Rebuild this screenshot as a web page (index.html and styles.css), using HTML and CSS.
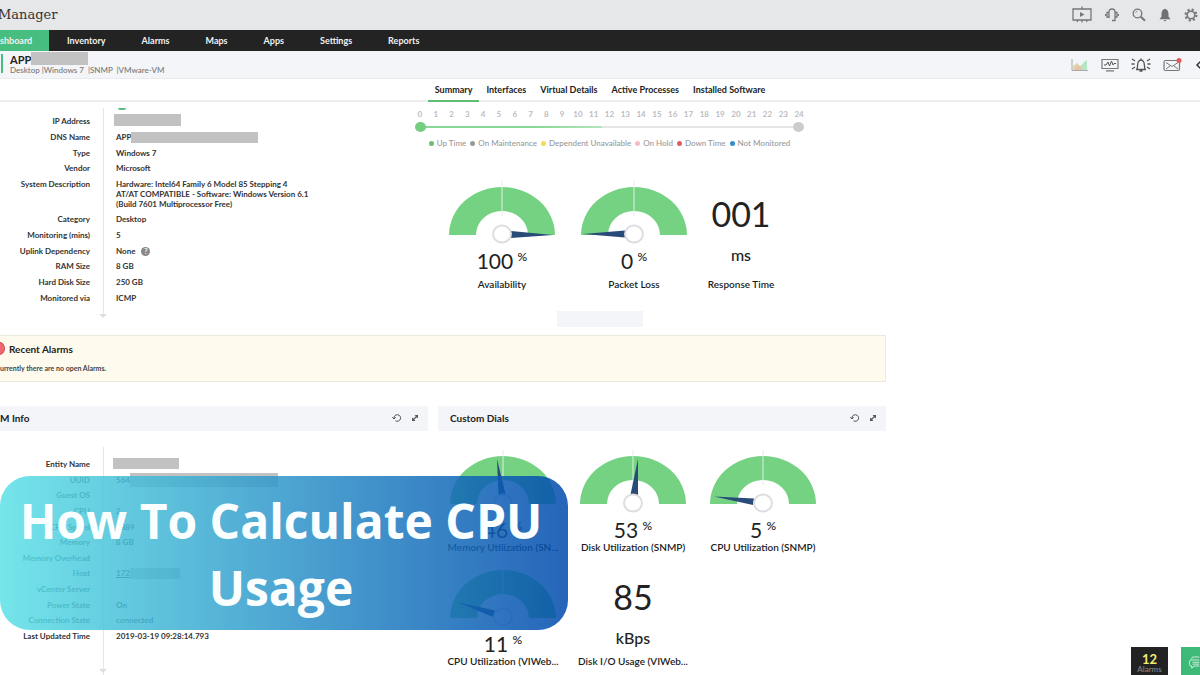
FILE: index.html
```html
<!DOCTYPE html>
<html lang="en">
<head>
<meta charset="utf-8">
<title>Manager</title>
<link rel="stylesheet" href="styles.css">
</head>
<body>
<svg class="defs" aria-hidden="true">
  <symbol id="dial" viewBox="0 0 106 64">
    <path d="M0 54A53 48 0 0 1 106 54H79A26 24 0 0 0 27 54Z" fill="#75d282"/>
    <path d="M53 0V35" stroke="#e3eee5"/>
  </symbol>
  <symbol id="hub" viewBox="0 0 106 64">
    <ellipse cx="53" cy="53" rx="9" ry="8.500" fill="#fff" stroke="#dedee1" stroke-width="2"/>
  </symbol>
  <symbol id="reload" viewBox="0 0 10 10">
    <path d="M2 5.500A3.300 3.300 0 1 1 3.500 7.800M.3 4.200 2 6l1.700-1.700" fill="none" stroke="#555"/>
  </symbol>
  <symbol id="expand" viewBox="0 0 8 8">
    <path d="M3.500 1H7V4.500L5.800 3.300 4.600 4.500 3.700 3.500 4.800 2.300ZM4.500 7H1V3.500L2.200 4.700 3.400 3.600 4.300 4.500 3.200 5.700Z" fill="#555"/>
  </symbol>
</svg>

<header class="brand">
  <span class="logo">Manager</span>
  <div class="tools">
    <button aria-label="Presentation"><svg width="20" height="18" viewBox="0 0 20 18"><path d="M1 3H19V14H1ZM10 .5V3M10 14v2.500M6 14 5 16M14 14l1 2" fill="none" stroke="#77777a" stroke-width="1.300"/><path d="M8 6l4.500 2.500L8 11Z" fill="#77777a"/></svg></button>
    <button aria-label="Support"><svg width="14" height="14" viewBox="0 0 14 14"><path d="M4 10V4Q4 1 7 1T10 4V10M3.500 4.500H2V9H3.500M10.500 4.500H12V9H10.500M10 9V12.500H7M.5 6v2M13.500 6v2" fill="none" stroke="#77777a" stroke-width="1.300"/></svg></button>
    <button aria-label="Search"><svg width="14" height="14" viewBox="0 0 14 14"><circle cx="5.500" cy="5.500" r="4.300" fill="none" stroke="#77777a" stroke-width="1.300"/><path d="M8.800 8.800 13 12.800" stroke="#77777a" stroke-width="2"/><path d="M3.500 5A2.200 2.200 0 0 1 5.500 3.200" fill="none" stroke="#999"/></svg></button>
    <button aria-label="Notifications"><svg width="12" height="14" viewBox="0 0 12 14"><path d="M6 .8C8.500 1.500 9.500 3.500 9.500 6V8.500L11.500 11.300H.5L2.500 8.500V6C2.500 3.500 3.500 1.500 6 .8ZM4.500 12H7.500L6 13.500Z" fill="#717174"/></svg></button>
    <button aria-label="Settings"><svg width="14" height="14" viewBox="0 0 14 14"><circle cx="7" cy="7" r="5.400" fill="none" stroke="#77777a" stroke-width="2.200" stroke-dasharray="2.120"/><circle cx="7" cy="7" r="3.800" fill="none" stroke="#77777a" stroke-width="1.600"/></svg></button>
  </div>
</header>

<nav class="menu">
  <a class="current" href="#">shboard</a>
  <a href="#">Inventory</a><a href="#">Alarms</a><a href="#">Maps</a><a href="#">Apps</a><a href="#">Settings</a><a href="#">Reports</a>
</nav>

<section class="device">
  <div class="device-name">
    <h1>APP<span class="mask name-mask"></span></h1>
    <p>Desktop |Windows 7 &nbsp;|SNMP &nbsp;|VMware-VM</p>
  </div>
  <div class="tools device-tools">
    <button aria-label="Graph"><svg width="18" height="14" viewBox="0 0 18 14"><path d="M2 12V8L6 5 9 8 13 5 16 8V12Z" fill="#dfd6b0"/><path d="M8 12 13 4 16 2V12Z" fill="#b5e6c6"/><path d="M3 12 7 7 12 12Z" fill="#e6c3a8"/><path d="M1 1V12.500H17" fill="none" stroke="#aaa"/></svg></button>
    <button aria-label="Monitor"><svg width="18" height="14" viewBox="0 0 18 14"><path d="M1 1.500H17V10.500H1ZM5 12.800H13" fill="none" stroke="#77777a" stroke-width="1.200"/><path d="M3 7H5L7 4 8.500 8 10.500 3 12 7 13 5.500H15" fill="none" stroke="#555"/></svg></button>
    <button aria-label="Alarm"><svg width="20" height="16" viewBox="0 0 20 16"><path d="M5 12.500H15M6 12C7 10 6 5 8 4Q10 2 12 4C14 5 13 10 14 12M10 1.500V3M8.500 14H11.500M4 4 1 2M3.500 7H.5M4 10 1 12M16 4l3-2M16.500 7h3M16 10l3 2" fill="none" stroke="#555" stroke-width="1.300"/></svg></button>
    <button aria-label="Mail"><svg width="20" height="14" viewBox="0 0 20 14"><rect x="1" y="2.500" width="15.500" height="10" rx="1.500" fill="none" stroke="#77777a" stroke-width="1.200"/><path d="M3 4.500 9 8.500 15 4.500M3 11 7 8M15 11 11 8" fill="none" stroke="#77777a"/><circle cx="16" cy="2.600" r="2.500" fill="#e35b58"/></svg></button>
    <button aria-label="Back"><svg width="8" height="12" viewBox="0 0 8 12"><path d="M7 1 2 6 7 11" fill="none" stroke="#333" stroke-width="1.500"/></svg></button>
  </div>
</section>

<nav class="tabs">
  <a class="active" href="#">Summary</a><a href="#">Interfaces</a><a href="#">Virtual Details</a><a href="#">Active Processes</a><a href="#">Installed Software</a>
</nav>

<main>
  <div class="split">
    <div class="facts overview-facts">
      <dl>
        <div><dt>IP Address</dt><dd><span class="mask ip-mask"></span></dd></div>
        <div><dt>DNS Name</dt><dd>APP<span class="mask dns-mask"></span></dd></div>
        <div><dt>Type</dt><dd>Windows 7</dd></div>
        <div><dt>Vendor</dt><dd>Microsoft</dd></div>
        <div><dt>System Description</dt><dd>Hardware: Intel64 Family 6 Model 85 Stepping 4<br>AT/AT COMPATIBLE - Software: Windows Version 6.1<br>(Build 7601 Multiprocessor Free)</dd></div>
        <div><dt>Category</dt><dd>Desktop</dd></div>
        <div><dt>Monitoring (mins)</dt><dd>5</dd></div>
        <div><dt>Uplink Dependency</dt><dd>None <span class="help">?</span></dd></div>
        <div><dt>RAM Size</dt><dd>8 GB</dd></div>
        <div><dt>Hard Disk Size</dt><dd>250 GB</dd></div>
        <div><dt>Monitored via</dt><dd>ICMP</dd></div>
      </dl>
      <span class="status-dot"></span>
    </div>
    <div class="health">
      <div class="timeline">
        <ol class="hours"><li>0</li><li>1</li><li>2</li><li>3</li><li>4</li><li>5</li><li>6</li><li>7</li><li>8</li><li>9</li><li>10</li><li>11</li><li>12</li><li>13</li><li>14</li><li>15</li><li>16</li><li>17</li><li>18</li><li>19</li><li>20</li><li>21</li><li>22</li><li>23</li><li>24</li></ol>
        <div class="track"><i class="knob up"></i><i class="bar"></i><i class="knob"></i></div>
        <ul class="legend"><li class="k-up">Up Time</li><li class="k-maint">On Maintenance</li><li class="k-dep">Dependent Unavailable</li><li class="k-hold">On Hold</li><li class="k-down">Down Time</li><li class="k-none">Not Monitored</li></ul>
      </div>
      <div class="dials vital-dials">
        <figure><svg class="gauge" viewBox="0 0 106 64"><use href="#dial"/><path d="M62 50 104 54 62 57Z" fill="#294b78"/><use href="#hub"/></svg><strong>100 <sup>%</sup></strong><figcaption>Availability</figcaption></figure>
        <figure><svg class="gauge" viewBox="0 0 106 64"><use href="#dial"/><path d="M44 49.500 2 53 44 56.500Z" fill="#294b78"/><use href="#hub"/></svg><strong>0 <sup>%</sup></strong><figcaption>Packet Loss</figcaption></figure>
        <figure><b>001</b><em>ms</em><figcaption>Response Time</figcaption></figure>
      </div>
      <div class="placeholder"></div>
    </div>
  </div>

  <section class="alarms">
    <h2><i class="alarm-dot"></i>Recent Alarms</h2>
    <p>urrently there are no open Alarms.</p>
  </section>

  <div class="split widgets">
    <section class="widget info-widget">
      <header><h2>M Info</h2><button aria-label="Reload"><svg width="10" height="10"><use href="#reload"/></svg></button><button aria-label="Expand"><svg width="8" height="8"><use href="#expand"/></svg></button></header>
      <div class="facts vm-facts">
        <dl>
          <div><dt>Entity Name</dt><dd><span class="mask entity-mask"></span></dd></div>
          <div><dt>UUID</dt><dd>564<span class="mask uuid-mask"></span></dd></div>
          <div><dt>Guest OS</dt><dd></dd></div>
          <div><dt>CPU</dt><dd>2</dd></div>
          <div><dt>CPU Speed</dt><dd>2389</dd></div>
          <div><dt>Memory</dt><dd>8 GB</dd></div>
          <div><dt>Memory Overhead</dt><dd></dd></div>
          <div><dt>Host</dt><dd><a href="#">172</a><span class="mask host-mask"></span></dd></div>
          <div><dt>vCenter Server</dt><dd></dd></div>
          <div><dt>Power State</dt><dd>On</dd></div>
          <div><dt>Connection State</dt><dd>connected</dd></div>
          <div><dt>Last Updated Time</dt><dd>2019-03-19 09:28:14.793</dd></div>
        </dl>
      </div>
    </section>
    <section class="widget dial-widget">
      <header><h2>Custom Dials</h2><button aria-label="Reload"><svg width="10" height="10"><use href="#reload"/></svg></button><button aria-label="Expand"><svg width="8" height="8"><use href="#expand"/></svg></button></header>
      <div class="dials custom-dials">
        <figure><svg class="gauge" viewBox="0 0 106 64"><use href="#dial"/><path d="M48.500 45 47 9 55.500 44Z" fill="#294b78"/><use href="#hub"/></svg><strong>46 <sup>%</sup></strong><figcaption>Memory Utilization (SN...</figcaption></figure>
        <figure><svg class="gauge" viewBox="0 0 106 64"><use href="#dial"/><path d="M50.500 44.500 58 9 58 45Z" fill="#294b78"/><use href="#hub"/></svg><strong>53 <sup>%</sup></strong><figcaption>Disk Utilization (SNMP)</figcaption></figure>
        <figure><svg class="gauge" viewBox="0 0 106 64"><use href="#dial"/><path d="M44 48.500 4 46.500 43 55Z" fill="#294b78"/><use href="#hub"/></svg><strong>5 <sup>%</sup></strong><figcaption>CPU Utilization (SNMP)</figcaption></figure>
        <figure><svg class="gauge" viewBox="0 0 106 64"><use href="#dial"/><path d="M45 46.500 7 38 43 53Z" fill="#294b78"/><use href="#hub"/></svg><strong>11 <sup>%</sup></strong><figcaption>CPU Utilization (VIWeb...</figcaption></figure>
        <figure><b>85</b><em>kBps</em><figcaption>Disk I/O Usage (VIWeb...</figcaption></figure>
      </div>
    </section>
  </div>
</main>

<div class="banner">How To Calculate CPU Usage</div>

<aside class="dock">
  <button class="count"><b>12</b><span>Alarms</span></button>
  <button class="chat" aria-label="Chat"><svg width="16" height="18" viewBox="0 0 16 18"><path d="M5 4V3Q5 1 7 1H15M15 5H4Q2 5 2 7V11Q2 13 4 13H5V16L8 13H15M6 8H15M6 10.500H15" fill="none" stroke="#d9f5e6" stroke-width="1.200"/></svg></button>
</aside>
</body>
</html>
```
FILE: styles.css
```css
* { box-sizing: border-box; }
body {
  margin: 0;
  min-height: 100vh;
  position: relative;
  overflow: hidden;
  background: #fff;
  color: #222;
  font: 500 8px/10px Lato, "Open Sans", sans-serif;
}
h1, h2, p, dl, dd, ol, ul, figure { margin: 0; padding: 0; }
ol, ul { list-style: none; }
a { color: inherit; text-decoration: none; }
button { border: 0; padding: 0; background: none; font: inherit; color: inherit; display: flex; flex: none; }
.defs { display: none; }

.brand {
  display: flex;
  justify-content: space-between;
  align-items: center;
  height: 30px;
  background: #e6e7e9;
}
.logo { margin-left: -2px; font: 13px/28px "DejaVu Serif", serif; color: #333; }
.tools { display: flex; align-items: center; gap: 13px; padding-right: 2px; }

.menu { display: flex; height: 21px; background: #232323; color: #f1f1f1; font-size: 9px; font-weight: 700; line-height: 21px; }
.menu a { padding: 0 18px; }
.menu .current { width: 49px; padding: 0; background: #48bd80; }

.device { display: flex; justify-content: space-between; height: 28px; background: #f4f5f8; border-bottom: 1px solid #e9ebed; }
.device-name { margin: 3px 0 5px 1px; padding-left: 7px; border-left: 2px solid #48bd80; }
.device h1 { display: flex; font-size: 11px; line-height: 11px; font-weight: 700; }
.device p { line-height: 10px; color: #777; }
.device-tools { gap: 12px; padding: 0; }
.device-tools button:last-child { margin-right: -3px; }

.tabs { display: flex; justify-content: center; height: 23px; border-bottom: 2px solid #eceef0; font-size: 9px; font-weight: 700; line-height: 22px; }
.tabs a { padding: 0 7px; height: 23px; }
.tabs .active { border-bottom: 2px solid #5fbd74; }

main { max-width: 886px; }
.split { display: flex; }
.mask { display: inline-block; flex: none; background: #c2c2c2; }
.name-mask { width: 57px; height: 13px; margin: -2px 0 0; }
.ip-mask { width: 67px; height: 12px; margin: -2px 0 0 -2px; }
.dns-mask { width: 127px; height: 11px; }
.entity-mask { width: 66px; height: 11px; margin: -1px 0 0 -3px; }
.uuid-mask { width: 148px; height: 14px; margin-top: -2px; }
.host-mask { width: 50px; height: 11px; }

.facts { position: relative; font-weight: 700; color: #333; }
.facts::before { content: ""; position: absolute; left: 103px; top: 6px; bottom: 20px; width: 1px; background: #e6e6e8; }
.facts::after { content: ""; position: absolute; left: 99px; bottom: 17px; border: 4px solid transparent; border-top-color: #dedee0; border-bottom: 0; }
.facts dl { display: flex; flex-direction: column; justify-content: space-between; }
.facts dl > div { display: grid; grid-template-columns: 90px 1fr; column-gap: 26px; min-height: 10px; }
.facts dt { text-align: right; }
.facts dd { height: 10px; white-space: nowrap; }
.facts dd:has(br) { height: 29px; }
.facts dd:has(.mask) { display: flex; }
.facts dd a { text-decoration: underline; }
.help { display: inline-block; width: 9px; height: 9px; margin-left: 4px; border-radius: 50%; background: #888; color: #fff; font-size: 7px; line-height: 9px; text-align: center; }
.status-dot { position: absolute; left: 118px; top: 6px; width: 8px; height: 2px; border-radius: 0 0 4px 4px; background: #5fbd84; }
.overview-facts { width: 419px; height: 233px; padding-top: 14px; }
.overview-facts dl { height: 187px; }
.vm-facts { height: 244px; padding-top: 28px; }
.vm-facts::before { top: 16px; bottom: 0; }
.vm-facts::after { bottom: 2px; }
.vm-facts dl { height: 182px; }

.health { flex: 1; }
.timeline { width: 395px; padding-top: 7px; margin-left: -7px; color: #bcbcbf; }
.hours { display: grid; grid-template-columns: repeat(25, 1fr); font-weight: 700; text-align: center; }
.track { display: flex; align-items: center; height: 16px; padding: 0 3px; }
.knob { width: 11px; height: 10px; border-radius: 50%; background: #ccc; }
.knob.up { background: #75cd82; }
.bar { flex: 1; height: 2px; background: linear-gradient(90deg, #8ad897 0 30%, #b4e5bc 48%, #e5e5e6 48%); }
.legend { display: flex; justify-content: center; gap: 4px; padding-top: 3px; color: #999; }
.legend li { display: flex; align-items: center; gap: 3px; }
.legend li::before { content: ""; width: 5px; height: 5px; border-radius: 50%; background: currentColor; }
.legend .k-up::before { color: #68bf75; }
.legend .k-maint::before { color: #999; }
.legend .k-dep::before { color: #f1e04c; }
.legend .k-hold::before { color: #f2bdcb; }
.legend .k-down::before { color: #df5f59; }
.legend .k-none::before { color: #2f8fcf; }

.dials { display: grid; justify-items: center; }
.dials figure { display: flex; flex-direction: column; align-items: center; white-space: nowrap; }
.gauge { width: 106px; height: 64px; }
.dials strong { font-size: 21px; line-height: 31px; font-weight: 400; }
.dials sup { font-size: 12px; line-height: 0; font-weight: 500; vertical-align: 8px; margin-left: -1px; }
.dials b { padding-top: 11px; font-size: 34px; line-height: 44px; font-weight: 400; }
.dials em { margin-bottom: 5px; padding-top: 3px; font-size: 16px; line-height: 32px; font-style: normal; }
.dials figcaption { font-size: 10px; line-height: 14px; font-weight: 600; color: #1c1c1c; }
.vital-dials { grid-template-columns: 132px 132px 82px; margin-left: 17px; padding-top: 33px; }
.vital-dials figcaption { padding-top: 1px; }
.placeholder { width: 86px; height: 16px; margin: 20px 0 0 138px; background: #f4f5f8; }

.alarms { height: 47px; padding-top: 6px; border: 1px solid #eceade; border-left: 0; background: #fefbee; }
.alarms h2 { display: flex; align-items: center; gap: 4px; font-size: 10px; line-height: 12px; }
.alarm-dot { width: 11px; height: 13px; margin-left: -6px; border: 1px solid #cf4d50; border-radius: 50%; background: #ef6a70; }
.alarms p { padding-top: 9px; font-size: 7px; font-weight: 700; line-height: 8px; color: #444; }

.widgets { gap: 10px; padding-top: 24px; }
.info-widget { flex: 428 0 0; }
.dial-widget { flex: 448 0 0; }
.widget header { display: flex; align-items: center; gap: 9px; height: 25px; padding: 0 9px 2px 0; background: #f4f5f8; }
.widget h2 { flex: 1; font-size: 10px; line-height: 12px; }
.widget .dial-title, .dial-widget header { padding-left: 12px; }
.custom-dials { grid-template-columns: repeat(3, 130px); padding-top: 19px; row-gap: 10px; }
.custom-dials figcaption { margin-top: -5px; }

.banner {
  position: absolute;
  left: 0;
  top: 476px;
  width: 568px;
  padding: 11px 12px 9px 6px;
  border-radius: 30px;
  background: linear-gradient(90deg, rgba(92, 225, 230, .85), rgba(0, 74, 173, .85));
  color: #fafeff;
  font: 700 48px/67px "Open Sans", sans-serif;
  text-align: center;
}

.dock { position: absolute; right: 0; bottom: 0; display: flex; gap: 13px; height: 28px; }
.count { flex-direction: column; align-items: center; width: 37px; padding-top: 6px; background: #222; color: #888; }
.count b { font-size: 13px; line-height: 12px; color: #f1ee75; }
.count span { line-height: 8px; }
.chat { width: 19px; padding: 7px 0 0 7px; background: #3fb977; overflow: hidden; }
```
